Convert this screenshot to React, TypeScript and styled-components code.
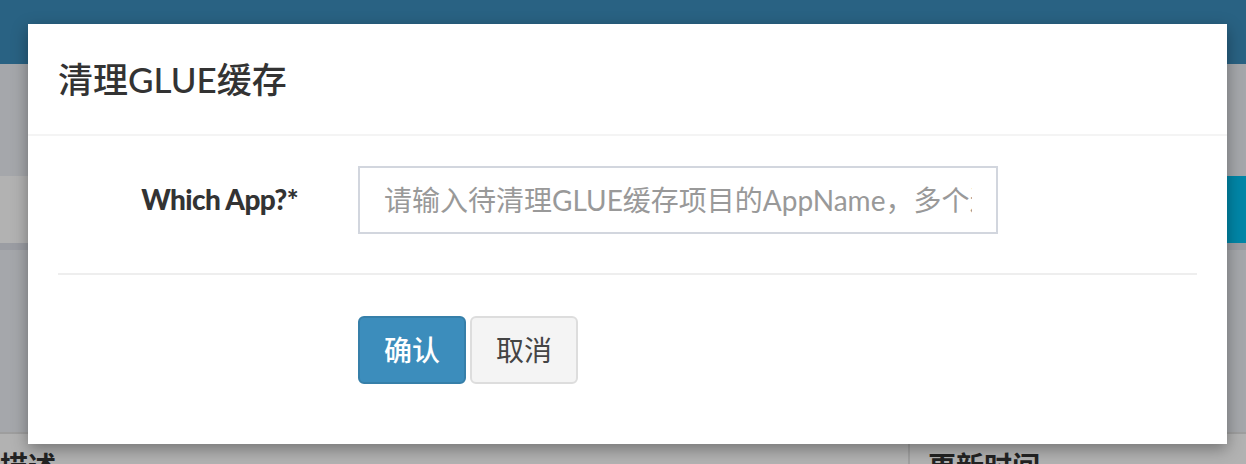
import React from "react";
import styled, { createGlobalStyle } from "styled-components";

const GlobalStyle = createGlobalStyle`
  html, body {
    margin: 0;
    padding: 0;
  }
  body {
    font-family: Lato, "Noto Sans CJK SC", sans-serif;
    color: #333;
  }
  * {
    box-sizing: border-box;
  }
`;

const Screen = styled.div`
  position: relative;
  width: 1246px;
  height: 464px;
  overflow: hidden;
  background-color: #ecf0f5;
`;

const TopBar = styled.div`
  height: 64px;
  background-color: #3c8dbc;
`;

const Content = styled.div`
  padding-top: 112px;
`;

const SearchBox = styled.div`
  display: flex;
  justify-content: flex-end;
  height: 74px;
  background-color: #fff;
  border-bottom: 7px solid #dfe1ea;
`;

const SearchButton = styled.div`
  width: 40px;
  background-color: #00c0ef;
  margin-right: -20px;
`;

const Spacer = styled.div`
  height: 182px;
`;

const TableHead = styled.div`
  display: grid;
  grid-template-columns: 908px 1fr;
  height: 40px;
  background-color: #fff;
  border-top: 2px solid #e3e3e3;
`;

const HeadCell = styled.div<{ $divided?: boolean }>`
  padding: 12px 0 0 ${(p) => (p.$divided ? "18px" : "0")};
  border-left: ${(p) => (p.$divided ? "2px solid #e6e6e6" : "none")};
  font-size: 28px;
  font-weight: 700;
  color: #333;
  line-height: 40px;
`;

const Overlay = styled.div`
  position: absolute;
  inset: 0;
  background-color: rgba(0, 0, 0, 0.3);
  padding: 24px 0 0 28px;
`;

const Modal = styled.div`
  width: 1199px;
  background-color: #fff;
  box-shadow: 0 5px 15px rgba(0, 0, 0, 0.35);
`;

const ModalHeader = styled.div`
  padding: 30px;
  border-bottom: 2px solid #f4f4f4;
`;

const ModalTitle = styled.h4`
  margin: 0;
  font-size: 35px;
  font-weight: 500;
  line-height: 50px;
  color: #333;
`;

const ModalBody = styled.div`
  padding: 30px;
`;

const FormRow = styled.div`
  display: grid;
  grid-template-columns: 300px 700px;
  margin: 0 -30px;
`;

const Label = styled.label`
  padding: 13px 30px 0;
  text-align: right;
  font-size: 28px;
  font-weight: 900;
  letter-spacing: -0.6px;
  line-height: 40px;
  color: #333;
`;

const InputCol = styled.div`
  padding: 0 30px;
`;

const TextInput = styled.input`
  display: block;
  width: 100%;
  height: 68px;
  padding: 12px 24px;
  border: 2px solid #d2d6de;
  border-radius: 0;
  font-family: Lato, "Noto Sans CJK SC", sans-serif;
  font-size: 28px;
  color: #555;
  outline: none;
  &::placeholder {
    color: #999;
  }
`;

const Divider = styled.hr`
  margin: 39px 0 41px;
  border: 0;
  border-top: 2px solid #eee;
`;

const ButtonRow = styled.div`
  display: flex;
  gap: 4px;
  padding-left: 300px;
  margin-bottom: 30px;
`;

const Button = styled.button<{ $primary?: boolean }>`
  width: 108px;
  height: 68px;
  border-radius: 6px;
  border: 2px solid ${(p) => (p.$primary ? "#367fa9" : "#ddd")};
  background-color: ${(p) => (p.$primary ? "#3c8dbc" : "#f4f4f4")};
  color: ${(p) => (p.$primary ? "#fff" : "#444")};
  font-family: Lato, "Noto Sans CJK SC", sans-serif;
  font-size: 28px;
  font-weight: ${(p) => (p.$primary ? 500 : 400)};
  line-height: 40px;
  cursor: pointer;
`;

function App() {
  return (
    <Screen>
      <GlobalStyle />
      <TopBar />
      <Content>
        <SearchBox>
          <SearchButton />
        </SearchBox>
        <Spacer />
        <TableHead>
          <HeadCell>描述</HeadCell>
          <HeadCell $divided>更新时间</HeadCell>
        </TableHead>
      </Content>
      <Overlay>
        <Modal>
          <ModalHeader>
            <ModalTitle>清理GLUE缓存</ModalTitle>
          </ModalHeader>
          <ModalBody>
            <FormRow>
              <Label>Which App?*</Label>
              <InputCol>
                <TextInput
                  type="text"
                  placeholder="请输入待清理GLUE缓存项目的AppName，多个逗号分隔"
                />
              </InputCol>
            </FormRow>
            <Divider />
            <ButtonRow>
              <Button $primary>确认</Button>
              <Button>取消</Button>
            </ButtonRow>
          </ModalBody>
        </Modal>
      </Overlay>
    </Screen>
  );
}

export default App;
